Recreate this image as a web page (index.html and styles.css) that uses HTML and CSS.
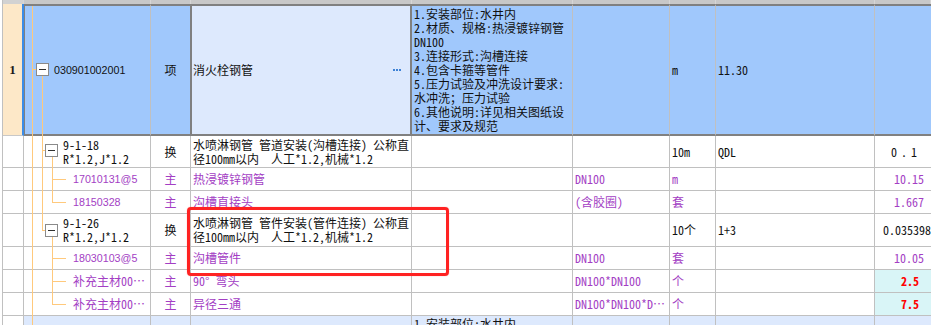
FILE: index.html
```html
<!DOCTYPE html>
<html lang="zh-CN">
<head>
<meta charset="utf-8">
<title>清单定额</title>
<link rel="stylesheet" href="styles.css">
</head>
<body>
<div class="sheet">
  <div class="grid">
    <div class="row hdr">
      <div class="c c0"></div><div class="c"></div><div class="c"></div><div class="c"></div><div class="c"></div><div class="c"></div><div class="c"></div><div class="c"></div><div class="c"></div>
    </div>

    <div class="row sel">
      <div class="c c0 num">1</div>
      <div class="c code lv0 sans">030901002001</div>
      <div class="c type">项</div>
      <div class="c name focus"><span>消火栓钢管</span><svg class="dots" width="8" height="2" viewBox="0 0 8 2"><rect x="0" y="0" width="2" height="2"/><rect x="3" y="0" width="2" height="2"/><rect x="6" y="0" width="2" height="2"/></svg></div>
      <div class="c feat top">1.安装部位:水井内<br>2.材质、规格:热浸镀锌钢管<br>DN100<br>3.连接形式:沟槽连接<br>4.包含卡箍等管件<br>5.压力试验及冲洗设计要求:<br>水冲洗；压力试验<br>6.其他说明:详见相关图纸设<br>计、要求及规范</div>
      <div class="c"></div>
      <div class="c">m</div>
      <div class="c">11.30</div>
      <div class="c last"></div>
    </div>

    <div class="row">
      <div class="c c0"></div>
      <div class="c code lv1">9-1-18<br>R*1.2,J*1.2</div>
      <div class="c type">换</div>
      <div class="c name">水喷淋钢管 管道安装(沟槽连接) 公称直<br>径100mm以内  人工*1.2,机械*1.2</div>
      <div class="c"></div>
      <div class="c"></div>
      <div class="c">10m</div>
      <div class="c">QDL</div>
      <div class="c last spaced">0.1</div>
    </div>

    <div class="row p">
      <div class="c c0"></div>
      <div class="c code lv2 sans">17010131@5</div>
      <div class="c type">主</div>
      <div class="c name">热浸镀锌钢管</div>
      <div class="c"></div>
      <div class="c">DN100</div>
      <div class="c">m</div>
      <div class="c"></div>
      <div class="c last">10.15</div>
    </div>

    <div class="row p">
      <div class="c c0"></div>
      <div class="c code lv2 sans">18150328</div>
      <div class="c type">主</div>
      <div class="c name">沟槽直接头</div>
      <div class="c"></div>
      <div class="c">(含胶圈)</div>
      <div class="c">套</div>
      <div class="c"></div>
      <div class="c last">1.667</div>
    </div>

    <div class="row">
      <div class="c c0"></div>
      <div class="c code lv1">9-1-26<br>R*1.2,J*1.2</div>
      <div class="c type">换</div>
      <div class="c name">水喷淋钢管 管件安装(管件连接) 公称直<br>径100mm以内  人工*1.2,机械*1.2</div>
      <div class="c"></div>
      <div class="c"></div>
      <div class="c">10个</div>
      <div class="c">1+3</div>
      <div class="c last overflow">0.035398</div>
    </div>

    <div class="row p">
      <div class="c c0"></div>
      <div class="c code lv2 sans">18030103@5</div>
      <div class="c type">主</div>
      <div class="c name">沟槽管件</div>
      <div class="c"></div>
      <div class="c">DN100</div>
      <div class="c">套</div>
      <div class="c"></div>
      <div class="c last">10.05</div>
    </div>

    <div class="row p">
      <div class="c c0"></div>
      <div class="c code lv2">补充主材00…</div>
      <div class="c type">主</div>
      <div class="c name">90° 弯头</div>
      <div class="c"></div>
      <div class="c">DN100*DN100</div>
      <div class="c">个</div>
      <div class="c"></div>
      <div class="c last warn">2.5</div>
    </div>

    <div class="row p">
      <div class="c c0"></div>
      <div class="c code lv2">补充主材00…</div>
      <div class="c type">主</div>
      <div class="c name">异径三通</div>
      <div class="c"></div>
      <div class="c">DN100*DN100*D…</div>
      <div class="c">个</div>
      <div class="c"></div>
      <div class="c last warn">7.5</div>
    </div>

    <div class="row next">
      <div class="c c0"></div>
      <div class="c"></div>
      <div class="c"></div>
      <div class="c"></div>
      <div class="c feat top">1.安装部位:水井内</div>
      <div class="c"></div>
      <div class="c"></div>
      <div class="c"></div>
      <div class="c last"></div>
    </div>
  </div>

  <svg class="tree" width="151" height="325" viewBox="0 0 151 325">
    <g stroke="#ffc97c" stroke-width="1" fill="none">
      <line x1="32.5" y1="6" x2="32.5" y2="325"/>
      <line x1="32" y1="69.5" x2="36" y2="69.5"/>
      <line x1="42.5" y1="76" x2="42.5" y2="230.5"/>
      <line x1="42" y1="150.5" x2="45" y2="150.5"/>
      <line x1="42" y1="230.5" x2="45" y2="230.5"/>
      <line x1="52.5" y1="157" x2="52.5" y2="202.5"/>
      <line x1="52" y1="179.5" x2="66" y2="179.5"/>
      <line x1="52" y1="202.5" x2="66" y2="202.5"/>
      <line x1="52.5" y1="237" x2="52.5" y2="304.5"/>
      <line x1="52" y1="258.5" x2="66" y2="258.5"/>
      <line x1="52" y1="281.5" x2="66" y2="281.5"/>
      <line x1="52" y1="304.5" x2="66" y2="304.5"/>
    </g>
    <g stroke="#8a8a8a" stroke-width="1" fill="#ffffff">
      <rect x="36.5" y="63.5" width="12" height="12"/>
      <rect x="45.5" y="144.5" width="12" height="12"/>
      <rect x="45.5" y="224.5" width="12" height="12"/>
    </g>
    <g stroke="#303030" stroke-width="1">
      <line x1="39" y1="69.5" x2="46" y2="69.5"/>
      <line x1="48" y1="150.5" x2="55" y2="150.5"/>
      <line x1="48" y1="230.5" x2="55" y2="230.5"/>
    </g>
  </svg>

  <div class="mark"></div>
</div>
</body>
</html>
```

FILE: styles.css
```css
html, body {
  margin: 0;
  padding: 0;
  background: #ffffff;
}

body {
  width: 931px;
  height: 325px;
  overflow: hidden;
}

.sheet {
  position: relative;
  width: 931px;
  height: 325px;
  overflow: hidden;
  padding-left: 2px;
  box-sizing: border-box;
  font-family: "Noto Sans Mono CJK SC", "Noto Sans CJK SC", "Liberation Mono", monospace;
  font-size: 12px;
  line-height: 14px;
  color: #111111;
}

.grid {
  display: grid;
  grid-template-columns: 21px 127px 40px 221px 161px 97px 46px 159px 56px;
  grid-template-rows: 4px 132px 32px 23px 23px 33px 23px 23px 23px 30px;
  border-left: 1px solid #c0c0c0;
}

.row {
  display: contents;
}

.c {
  box-sizing: border-box;
  display: flex;
  align-items: center;
  padding: 0 2px;
  border-right: 1px solid #c0c0c0;
  border-bottom: 1px solid #c0c0c0;
  background: #ffffff;
  white-space: pre;
  overflow: hidden;
  min-width: 0;
}

.hdr .c {
  background: #c8c8c8;
  border-right: 1px solid #d6d6d6;
  border-bottom: none;
}

.hdr .c0 {
  background: #d2d2d2;
}

/* selected bill row */
.sel .c {
  background: #a0c8fc;
  border-top: 2px solid #808080;
  border-bottom: 2px solid #808080;
}

.sel .num {
  background: #fde8c8;
  border-top: none;
  border-bottom: 1px solid #c8c8c8;
  border-right: 2px solid #3a8ce8;
  justify-content: center;
  font-family: "Liberation Serif", serif;
  font-weight: bold;
  font-size: 13px;
  color: #1a1a1a;
}

.sel .code {
  border-left: 1px solid #808080;
  padding-left: 29px;
}

.sel .type {
  border-right: 1px solid #808080;
}

.sel .focus {
  background: #dde9fd;
  border-left: 1px solid #808080;
  border-right: 2px solid #808080;
  padding-left: 1px;
  justify-content: space-between;
}

.dots {
  margin-right: 7px;
  fill: #3d82d6;
}

.top {
  align-items: flex-start;
  padding-top: 1px;
}

.sans {
  font-family: "Liberation Sans", Arial, sans-serif;
  font-size: 10.7px;
}

.code {
  padding-left: 30px;
}

.lv1 {
  padding-left: 39px;
}

.lv2 {
  padding-left: 49px;
}

.type {
  justify-content: center;
  padding: 0;
}

.last {
  border-right: none;
  justify-content: flex-end;
  padding-right: 7px;
}

.spaced {
  letter-spacing: 4px;
  padding-right: 10px;
}

.overflow {
  justify-content: flex-start;
  padding-left: 8px;
  padding-right: 0;
  overflow: visible;
}

.p .c {
  color: #a33ec4;
}

.warn {
  background: #d9f5f7 !important;
  color: #ff0000 !important;
  font-weight: bold;
  padding-right: 12px;
}

.next .c {
  background: #dde9fd;
}

.next .c0 {
  background: #ffffff;
}

.tree {
  position: absolute;
  left: 0;
  top: 0;
  pointer-events: none;
}

.mark {
  position: absolute;
  left: 187px;
  top: 207px;
  width: 262px;
  height: 69px;
  box-sizing: border-box;
  border: 3px solid #ff2222;
  border-radius: 4px;
  box-shadow: 0 0 1px rgba(255, 40, 40, 0.6);
  pointer-events: none;
}
```
